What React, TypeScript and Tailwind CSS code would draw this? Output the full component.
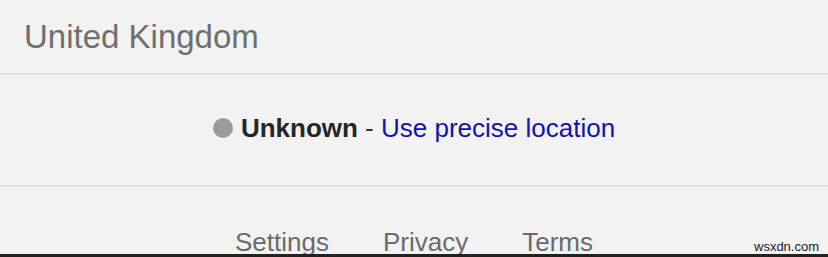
import React from 'react'

const App: React.FC = () => {
  const links = ['Settings', 'Privacy', 'Terms']

  return (
    <div className="relative w-[828px] h-[257px] overflow-hidden bg-[#f2f2f2] font-['Liberation_Sans',Arial,sans-serif]">
      {/* Region header */}
      <div className="h-[73px] px-6 flex items-center">
        <span className="text-[33px] leading-none text-[#6f6f6f]">United Kingdom</span>
      </div>
      <div className="h-[2px] bg-[#e2e2e2]" />

      {/* Location status */}
      <div className="h-[110px] pb-1 flex items-center justify-center text-[26px] leading-none">
        <span className="w-5 h-5 rounded-full bg-[#9b9b9b] mr-2" />
        <span className="font-bold text-[#262626]">Unknown</span>
        <span className="text-[#333] whitespace-pre"> - </span>
        <a className="text-[#1111b5]">Use precise location</a>
      </div>
      <div className="h-[2px] bg-[#e2e2e2]" />

      {/* Footer links, cut off by the bottom bar */}
      <div className="h-[67px] overflow-hidden pt-[42px] flex justify-center gap-[54px]">
        {links.map((l) => (
          <span key={l} className="text-[26px] leading-none text-[#6b6b6b]">{l}</span>
        ))}
      </div>
      <div className="h-[3px] bg-[#222]" />

      <span className="absolute left-[754px] top-[240px] text-[13px] leading-none text-[#222]">
        wsxdn.com
      </span>
    </div>
  )
}

export default App
